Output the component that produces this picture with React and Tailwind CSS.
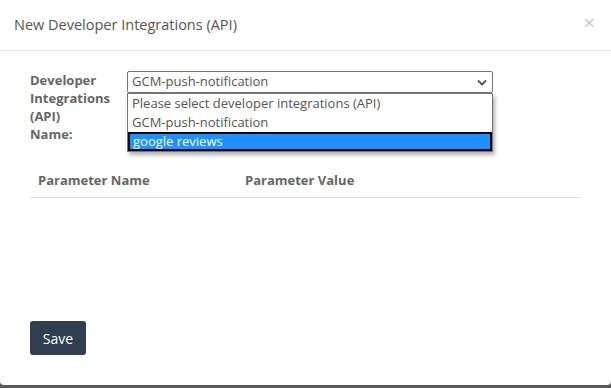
export default function App() {
  const font = { fontFamily: '"Open Sans", sans-serif' }
  return (
    <div className="h-screen bg-[#5a5a5a] overflow-hidden" style={font}>
      <div className="h-[385px] bg-white rounded-b-[4px] flex flex-col">
        <header className="h-[51px] shrink-0 border-b border-[#e5e5e5] flex items-center justify-between pl-[14px] pr-[16px]">
          <h4 className="text-[14.5px] text-[#555] leading-none">New Developer Integrations (API)</h4>
          <span className="text-[20px] text-[#c4c4c4] leading-none -mt-[4px]">×</span>
        </header>
        <div className="flex-1 flex flex-col px-[30px] pt-[20px]">
          <div className="flex">
            <label className="w-[97px] shrink-0 text-[13px] font-bold text-[#666] leading-[18px]">
              Developer<br />Integrations<br />(API)<br />Name:
            </label>
            <div className="relative w-[366px]">
              <div className="h-[22px] border border-[#767676] rounded-[2px] flex items-center justify-between pl-[4px] pr-[4px] text-[13px] text-[#555]">
                <span>GCM-push-notification</span>
                <svg width="10" height="7" viewBox="0 0 10 7" className="mr-[1px]">
                  <path d="M1 1.5 L5 5.5 L9 1.5" fill="none" stroke="#555" strokeWidth="1.8" />
                </svg>
              </div>
              <ul className="absolute left-0 top-[22px] w-[366px] bg-white border border-[#767676] text-[13px] leading-[19px] shadow-[2px_3px_4px_rgba(0,0,0,0.3)]">
                <li className="pl-[4px] text-[#555]">Please select developer integrations (API)</li>
                <li className="pl-[4px] text-[#555]">GCM-push-notification</li>
                <li className="pl-[3px] bg-[#1e90ff] text-white border-2 border-black leading-[15px]">google reviews</li>
              </ul>
            </div>
          </div>
          <div className="mt-[28px] border-b border-[#ddd] flex text-[13px] font-bold text-[#666] pb-[6px] pl-[8px]">
            <span className="w-[207px]">Parameter Name</span>
            <span>Parameter Value</span>
          </div>
          <div className="flex-1" />
          <div className="pb-[30px]">
            <button className="h-[34px] w-[56px] bg-[#2f3e50] text-white text-[14px] rounded-[3px]">Save</button>
          </div>
        </div>
      </div>
    </div>
  )
}
